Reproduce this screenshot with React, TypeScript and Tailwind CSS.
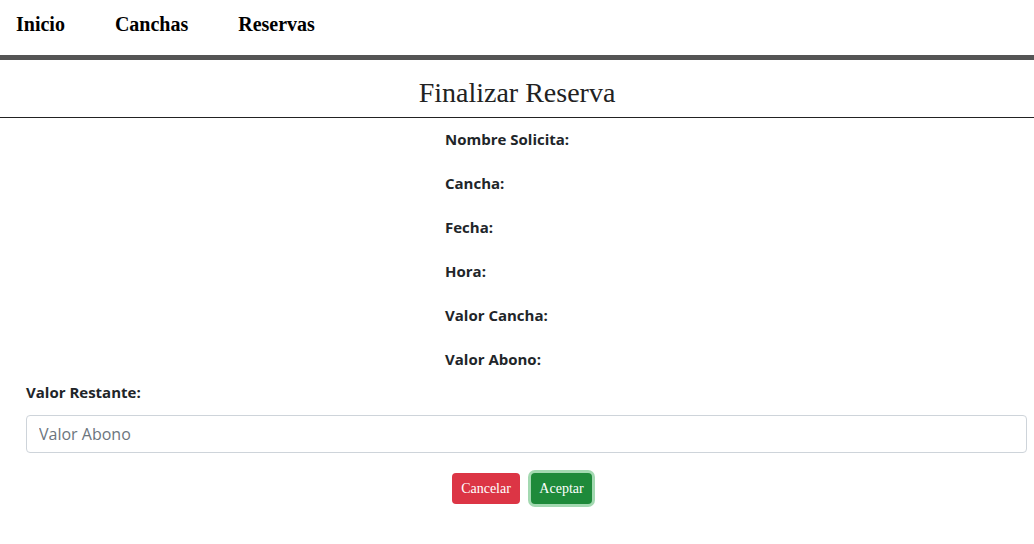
export default function App() {
  const fields = [
    "Nombre Solicita:",
    "Cancha:",
    "Fecha:",
    "Hora:",
    "Valor Cancha:",
    "Valor Abono:",
  ];

  return (
    <div className="min-h-screen bg-white text-[#212529]">
      {/* Nav */}
      <nav
        className="flex h-[55px] items-start gap-[50px] px-4 pt-[12px] text-[20px] font-bold leading-[24px] text-black"
        style={{ fontFamily: '"Liberation Serif", serif' }}
      >
        <a>Inicio</a>
        <a>Canchas</a>
        <a>Reservas</a>
      </nav>
      <div className="h-[5px] bg-[#555]" />

      <h1
        className="mt-[13px] text-center text-[28px] leading-[40px] text-[#222]"
        style={{ fontFamily: '"Liberation Serif", serif' }}
      >
        Finalizar Reserva
      </h1>
      <div className="mt-[4px] h-px bg-[#222]" />

      <div style={{ fontFamily: '"Open Sans", sans-serif' }}>
        <div className="flex flex-col gap-[20px] pl-[445px] pt-[9px]">
          {fields.map((f) => (
            <p key={f} className="text-[15px] font-bold leading-6">
              {f}
            </p>
          ))}
        </div>

        <div className="pl-[26px] pr-[7px] pt-[9px]">
          <p className="mb-[11px] text-[15px] font-bold leading-6">Valor Restante:</p>
          <input
            placeholder="Valor Abono"
            className="h-[38px] w-full rounded-[4px] border border-[#ced4da] px-3 text-base text-[#212529] outline-none placeholder:text-[#6c757d]"
          />
        </div>
      </div>

      <div
        className="mt-[20px] flex gap-[11px] pl-[452px] text-[14px] text-white"
        style={{ fontFamily: '"Liberation Serif", serif' }}
      >
        <button className="h-[31px] w-[68px] rounded-[4px] bg-[#dc3545]">Cancelar</button>
        <button className="h-[31px] w-[61px] rounded-[4px] bg-[#1e8a3a] ring-[3px] ring-[#a3d9b1]">
          Aceptar
        </button>
      </div>
    </div>
  );
}
